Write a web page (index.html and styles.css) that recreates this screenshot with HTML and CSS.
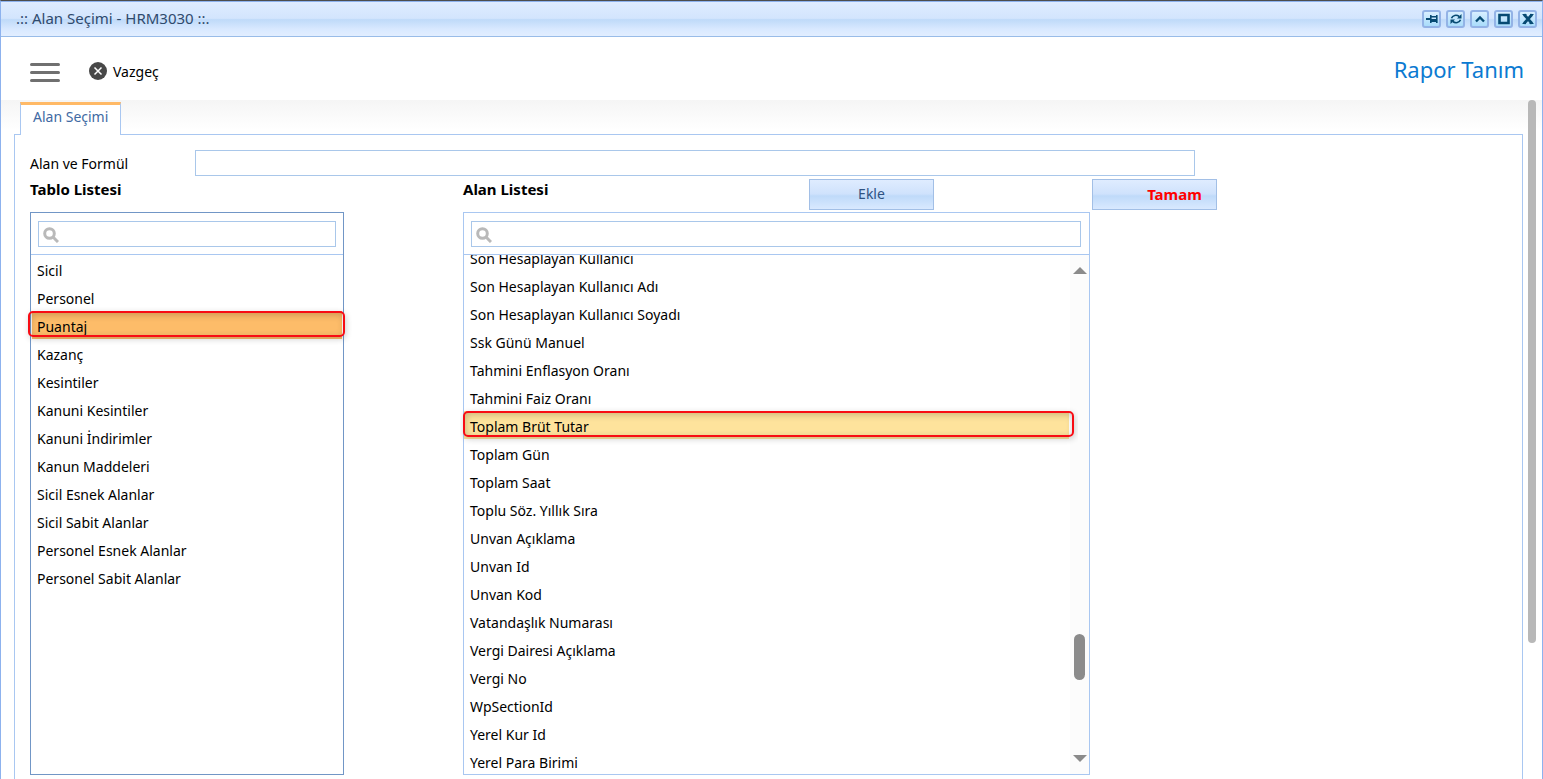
FILE: index.html
```html
<!DOCTYPE html>
<html lang="tr">
<head>
  <meta charset="UTF-8">
  <meta name="viewport" content="width=device-width, initial-scale=1.0">
  <title>Alan Seçimi - HRM3030</title>
  <link rel="stylesheet" href="styles.css">
</head>
<body>
  <div class="window">
    <header class="titlebar">
      <span class="titlebar-text">.:: Alan Seçimi - HRM3030 ::.</span>
      <div class="titlebar-buttons">
        <button class="win-btn" aria-label="Sabitle"><svg viewBox="0 0 14 14"><path class="solid" d="M1 6h4v2H1zM5 3h1.6v8H5zM6.600 4h5v1.400h-5zM6.600 7h5v3h-5zM11 3h1.600v8H11z"/></svg></button>
        <button class="win-btn" aria-label="Yenile"><svg viewBox="0 0 14 14"><path d="M2.500 6.200C3.500 3.200 7.500 2.400 10.200 4.500M11.500 7.800C10.500 10.800 6.500 11.600 3.800 9.500" stroke-width="1.6"/><path class="solid" d="M12.500 2v4.500H8zM1.500 12V7.500H6z"/></svg></button>
        <button class="win-btn" aria-label="Küçült"><svg viewBox="0 0 14 14"><path d="M3 9.500l4-4 4 4" stroke-width="2.4"/></svg></button>
        <button class="win-btn" aria-label="Büyüt"><svg viewBox="0 0 14 14"><path d="M2.500 3h9v8h-9z" stroke-width="2.6"/></svg></button>
        <button class="win-btn" aria-label="Kapat"><svg viewBox="0 0 14 14"><path d="M3 2.500l8 9M11 2.500l-8 9" stroke-width="2.8"/><path d="M1.500 2.500h4M9 2.500h3.500M1.500 11.500H5M8.500 11.500h4" stroke-width="1"/></svg></button>
      </div>
    </header>

    <div class="toolbar">
      <button class="menu-btn" aria-label="Menü"><span></span><span></span><span></span></button>
      <button class="cancel-btn">
        <svg viewBox="0 0 18 18"><circle cx="9" cy="9" r="9" fill="#484848"/><path d="M5.500 5.500l7 7M12.500 5.500l-7 7" stroke="#fff" stroke-width="1.5"/></svg>
        Vazgeç
      </button>
      <h1 class="page-title">Rapor Tanım</h1>
    </div>

    <main class="content">
      <div class="tabs">
        <a href="#alan" class="tab">Alan Seçimi</a>
      </div>
      <section class="panel" id="alan">
        <div class="formula-row">
          <label for="formula">Alan ve Formül</label>
          <input type="text" id="formula" class="text-input">
        </div>

        <div class="columns">
          <h2 class="col-title">Tablo Listesi</h2>
          <div class="field-head">
            <h2 class="col-title">Alan Listesi</h2>
            <button class="btn">Ekle</button>
          </div>
          <div class="ok-cell"><button class="btn btn-ok">Tamam</button></div>

          <div class="listbox listbox-tables">
            <div class="search">
              <svg viewBox="0 0 16 16"><circle cx="6.500" cy="6.500" r="4.800"/><path d="M10 10l5 5"/></svg>
              <input type="text" class="text-input" aria-label="Tablo ara">
            </div>
            <div class="list-body">
              <ul class="list">
                <li>Sicil</li>
                <li>Personel</li>
                <li class="selected">Puantaj</li>
                <li>Kazanç</li>
                <li>Kesintiler</li>
                <li>Kanuni Kesintiler</li>
                <li>Kanuni İndirimler</li>
                <li>Kanun Maddeleri</li>
                <li>Sicil Esnek Alanlar</li>
                <li>Sicil Sabit Alanlar</li>
                <li>Personel Esnek Alanlar</li>
                <li>Personel Sabit Alanlar</li>
              </ul>
            </div>
          </div>

          <div class="listbox listbox-fields">
            <div class="search">
              <svg viewBox="0 0 16 16"><circle cx="6.500" cy="6.500" r="4.800"/><path d="M10 10l5 5"/></svg>
              <input type="text" class="text-input" aria-label="Alan ara">
            </div>
            <div class="list-body">
              <ul class="list scrolled">
                <li>Son Hesaplayan Kullanıcı</li>
                <li>Son Hesaplayan Kullanıcı Adı</li>
                <li>Son Hesaplayan Kullanıcı Soyadı</li>
                <li>Ssk Günü Manuel</li>
                <li>Tahmini Enflasyon Oranı</li>
                <li>Tahmini Faiz Oranı</li>
                <li class="hovered">Toplam Brüt Tutar</li>
                <li>Toplam Gün</li>
                <li>Toplam Saat</li>
                <li>Toplu Söz. Yıllık Sıra</li>
                <li>Unvan Açıklama</li>
                <li>Unvan Id</li>
                <li>Unvan Kod</li>
                <li>Vatandaşlık Numarası</li>
                <li>Vergi Dairesi Açıklama</li>
                <li>Vergi No</li>
                <li>WpSectionId</li>
                <li>Yerel Kur Id</li>
                <li>Yerel Para Birimi</li>
              </ul>
              <div class="scrollbar">
                <span class="arrow-up"></span>
                <span class="track"><span class="thumb"></span></span>
                <span class="arrow-down"></span>
              </div>
            </div>
          </div>
        </div>
      </section>
      <div class="page-thumb"></div>
    </main>
  </div>
</body>
</html>
```

FILE: styles.css
```css
* {
  box-sizing: border-box;
}

body {
  margin: 0;
  height: 100vh;
  overflow: hidden;
  font-family: Tahoma, "Noto Sans", sans-serif;
  font-size: 14px;
  color: #000;
  background: #fff;
}

button,
input {
  font: inherit;
}

h1,
h2,
ul {
  margin: 0;
  padding: 0;
}

.window {
  height: 100vh;
  display: flex;
  flex-direction: column;
  border: 1px solid #8db2ee;
  border-top: 1px solid #4d4d4d;
  border-bottom: 0;
}

/* title bar */
.titlebar {
  display: flex;
  align-items: center;
  justify-content: space-between;
  height: 36px;
  flex: none;
  padding: 0 5px 0 15px;
  border-top: 1px solid #8db2ee;
  border-bottom: 1px solid #99bce8;
  background: linear-gradient(#dfecff 0%, #d3e5fd 48%, #bfdaf9 52%, #d9e9ff 80%, #e2eeff 100%);
  color: #2f4a6d;
}

.titlebar-text {
  padding-bottom: 3px;
  font-size: 15px;
}

.titlebar-buttons {
  display: flex;
  gap: 5px;
}

.win-btn {
  width: 19px;
  height: 18px;
  padding: 0;
  display: flex;
  align-items: center;
  justify-content: center;
  border: 2px solid #93b3e6;
  border-radius: 3px;
  background: linear-gradient(#d8efff, #a9dcfb);
}

.win-btn svg {
  width: 14px;
  height: 14px;
  fill: none;
  stroke: #064a72;
}

.win-btn .solid {
  fill: #064a72;
  stroke: none;
}

/* toolbar */
.toolbar {
  display: flex;
  align-items: center;
  height: 63px;
  flex: none;
  padding: 5px 18px 0 29px;
  background: #fff;
}

.menu-btn {
  width: 30px;
  padding: 2px 0 0;
  display: flex;
  flex-direction: column;
  gap: 5px;
  border: 0;
  background: none;
}

.menu-btn span {
  height: 3px;
  border-radius: 2px;
  background: #707070;
}

.cancel-btn {
  display: flex;
  align-items: center;
  gap: 6px;
  margin-left: 29px;
  padding: 0;
  border: 0;
  background: none;
  color: #000;
}

.cancel-btn svg {
  width: 18px;
  height: 18px;
}

.page-title {
  margin-left: auto;
  padding-bottom: 4px;
  font-size: 22px;
  font-weight: normal;
  color: #0b7ad1;
}

/* content */
.content {
  position: relative;
  flex: 1;
  min-height: 0;
  display: flex;
  flex-direction: column;
  padding: 2px 19px 0 13px;
  background: linear-gradient(#f5f5f5, #fff 30px);
}

.tabs {
  display: flex;
  padding-left: 6px;
}

.tab {
  position: relative;
  height: 33px;
  margin-bottom: -1px;
  padding: 0 12px;
  line-height: 24px;
  border: 1px solid #a9c7f1;
  border-top: 3px solid #ffb966;
  border-bottom: 0;
  background: #fff;
  color: #416aa3;
  text-decoration: none;
}

.panel {
  flex: 1;
  min-height: 0;
  padding: 15px 0 0 15px;
  border: 1px solid #a9c7f1;
  border-bottom: 0;
  background: #fff;
}

.text-input {
  min-width: 0;
  height: 26px;
  border: 1px solid #a9c7ea;
  background: #fff;
}

.formula-row {
  display: flex;
  align-items: center;
}

.formula-row label {
  width: 165px;
}

.formula-row .text-input {
  flex: 1;
  max-width: 1000px;
}

.columns {
  display: grid;
  grid-template-columns: 314fr 119fr 627fr 432fr;
  row-gap: 2px;
  margin-top: 3px;
}

.col-title {
  font-size: 15px;
  line-height: 20px;
}

.field-head {
  grid-column: 3;
  display: flex;
  justify-content: space-between;
  padding-right: 156px;
}

.ok-cell {
  padding-left: 2px;
}

.btn {
  width: 125px;
  height: 31px;
  padding: 0 0 2px;
  border: 1px solid #a2bfe6;
  background: linear-gradient(#dfecff 0%, #cfe2fc 48%, #bfdaf9 55%, #d9e9ff 100%);
  color: #2f5383;
}

.btn-ok {
  padding-left: 40px;
  font-size: 15px;
  font-weight: bold;
  color: #f00;
}

/* list boxes */
.listbox {
  height: 563px;
  display: flex;
  flex-direction: column;
  border: 1px solid #a9c7f1;
}

.listbox-tables {
  border-color: #7196c6;
}

.listbox-fields {
  grid-column: 3;
}

.search {
  position: relative;
  display: flex;
  padding: 8px 7px 7px;
  border-bottom: 1px solid #a9c7f1;
}

.listbox-fields .search {
  padding-right: 8px;
}

.search .text-input {
  flex: 1;
  padding-left: 24px;
}

.search svg {
  position: absolute;
  left: 12px;
  top: 14px;
  width: 16px;
  height: 16px;
  fill: none;
  stroke: #b9b9b9;
  stroke-width: 3;
}

.list-body {
  flex: 1;
  min-height: 0;
  display: flex;
}

.list {
  flex: 1;
  list-style: none;
}

.list li {
  position: relative;
  height: 28px;
  padding-left: 6px;
  line-height: 32px;
}

.list.scrolled {
  margin-top: -12px;
  clip-path: inset(12px -8px 0 -4px);
}

.listbox-tables .selected {
  margin: 0 1px;
  padding-left: 5px;
  background: #fdbc69;
}

.list .hovered {
  margin-right: 1px;
  background: #fee39c;
}

/* red frame round the marked row */
.selected::after,
.hovered::after {
  content: "";
  position: absolute;
  top: 0;
  bottom: 2px;
  left: -4px;
  right: -3px;
  border: 2px solid #f80c14;
  border-radius: 5px;
  box-shadow: 1px 2px 6px rgba(0, 0, 0, 0.2), inset 1px 2px 7px rgba(0, 0, 0, 0.2);
}

.hovered::after {
  left: -1px;
  right: -5px;
}

.scrollbar {
  width: 19px;
  display: flex;
  flex-direction: column;
  align-items: center;
  padding: 12px 0;
  background: #fcfcfc;
}

.arrow-up,
.arrow-down {
  border: 7px solid transparent;
  border-top-width: 0;
  border-bottom: 7px solid #8b8b8b;
}

.arrow-down {
  border-top: 7px solid #8b8b8b;
  border-bottom-width: 0;
}

.track {
  flex: 1;
  display: flex;
  flex-direction: column;
  justify-content: flex-end;
  padding-bottom: 75px;
}

.thumb {
  width: 11px;
  height: 46px;
  border-radius: 6px;
  background: #8b8b8b;
}

.page-thumb {
  position: absolute;
  top: 0;
  right: 6px;
  width: 8px;
  height: 80%;
  border-radius: 4px;
  background: #b8b8b8;
}
```
